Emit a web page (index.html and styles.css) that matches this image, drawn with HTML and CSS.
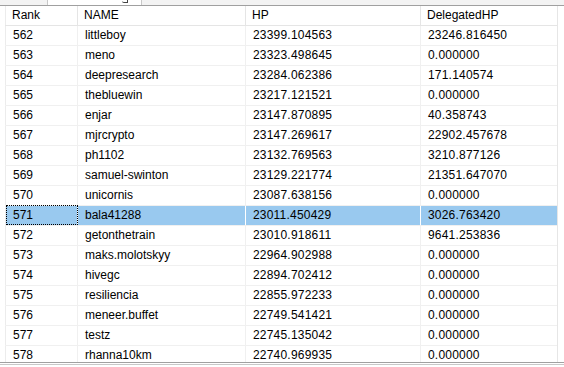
FILE: index.html
```html
<!DOCTYPE html>
<html>
<head>
<meta charset="utf-8">
<link rel="stylesheet" href="styles.css">
</head>
<body>
<div class="topbar">
  <div class="tab"><span class="tab-mark"></span></div>
</div>
<div class="grid-frame">
  <div class="grid-scroll">
    <table class="grid">
      <colgroup>
        <col class="c-rank"><col class="c-name"><col class="c-hp"><col class="c-dhp">
      </colgroup>
      <thead>
        <tr><th>Rank</th><th>NAME</th><th>HP</th><th>DelegatedHP</th></tr>
      </thead>
      <tbody>
        <tr><td>562</td><td>littleboy</td><td class="num">23399.104563</td><td class="num">23246.816450</td></tr>
        <tr><td>563</td><td>meno</td><td class="num">23323.498645</td><td class="num">0.000000</td></tr>
        <tr><td>564</td><td>deepresearch</td><td class="num">23284.062386</td><td class="num">171.140574</td></tr>
        <tr><td>565</td><td>thebluewin</td><td class="num">23217.121521</td><td class="num">0.000000</td></tr>
        <tr><td>566</td><td>enjar</td><td class="num">23147.870895</td><td class="num">40.358743</td></tr>
        <tr><td>567</td><td>mjrcrypto</td><td class="num">23147.269617</td><td class="num">22902.457678</td></tr>
        <tr><td>568</td><td>ph1102</td><td class="num">23132.769563</td><td class="num">3210.877126</td></tr>
        <tr><td>569</td><td>samuel-swinton</td><td class="num">23129.221774</td><td class="num">21351.647070</td></tr>
        <tr><td>570</td><td>unicornis</td><td class="num">23087.638156</td><td class="num">0.000000</td></tr>
        <tr class="selected"><td class="focus">571</td><td>bala41288</td><td class="num">23011.450429</td><td class="num">3026.763420</td></tr>
        <tr><td>572</td><td>getonthetrain</td><td class="num">23010.918611</td><td class="num">9641.253836</td></tr>
        <tr><td>573</td><td>maks.molotskyy</td><td class="num">22964.902988</td><td class="num">0.000000</td></tr>
        <tr><td>574</td><td>hivegc</td><td class="num">22894.702412</td><td class="num">0.000000</td></tr>
        <tr><td>575</td><td>resiliencia</td><td class="num">22855.972233</td><td class="num">0.000000</td></tr>
        <tr><td>576</td><td>meneer.buffet</td><td class="num">22749.541421</td><td class="num">0.000000</td></tr>
        <tr><td>577</td><td>testz</td><td class="num">22745.135042</td><td class="num">0.000000</td></tr>
        <tr><td>578</td><td>rhanna10km</td><td class="num">22740.969935</td><td class="num">0.000000</td></tr>
      </tbody>
    </table>
  </div>
</div>
<div class="bottom-line"></div>
</body>
</html>
```

FILE: styles.css
```css
html, body {
  margin: 0;
  padding: 0;
  background: #ffffff;
  width: 564px;
  height: 367px;
  overflow: hidden;
  font-family: "Liberation Sans", Arial, sans-serif;
  font-size: 12px;
  color: #000000;
}

.topbar {
  height: 5px;
  background: #f3f3f3;
  border-bottom: 1px solid #a0a0a0;
  overflow: hidden;
}

.tab {
  margin-left: 47px;
  width: 95px;
  height: 5px;
  background: #ffffff;
  border-left: 1px solid #c8c8c8;
  border-right: 1px solid #c8c8c8;
  box-sizing: border-box;
  position: relative;
  overflow: hidden;
}

.tab-mark {
  position: absolute;
  left: 74px;
  top: 0;
  width: 5px;
  height: 2px;
  border-bottom: 1px solid #444;
  border-right: 1px solid #444;
  border-bottom-left-radius: 2px;
}

.grid-frame {
  height: 356px;
  border-bottom: 1px solid #a0a0a0;
}

.grid-scroll {
  height: 356px;
  overflow: hidden;
  padding-left: 5px;
  border-right: 1px solid #e6e6e6;
  width: 552px;
}

.bottom-line {
  margin-top: 1px;
  height: 0;
  border-top: 1px solid #c8c8c8;
}

.grid {
  border-collapse: collapse;
  table-layout: fixed;
  width: 553px;
  border-left: 1px solid #ececec;
}

.c-rank { width: 72px; }
.c-name { width: 168px; }
.c-hp { width: 175px; }
.c-dhp { width: 138px; }

.grid th {
  height: 19px;
  font-weight: normal;
  text-align: left;
  padding: 0 0 0 6px;
  border-right: 1px solid #e5e5e5;
  border-bottom: 1px solid #e5e5e5;
  box-sizing: border-box;
  white-space: nowrap;
  line-height: 18px;
}

.grid td {
  height: 20px;
  padding: 0 0 0 7px;
  border-right: 1px solid #f0f0f0;
  border-bottom: 1px solid #f0f0f0;
  box-sizing: border-box;
  white-space: nowrap;
  line-height: 19px;
  overflow: hidden;
}

.grid td.num {
  letter-spacing: 0.2px;
}

.grid tr.selected td {
  background: #99c9ef;
  border-right-color: #ffffff;
}

.grid td.focus {
  outline: 1px dotted #000000;
  outline-offset: -1px;
}
```
